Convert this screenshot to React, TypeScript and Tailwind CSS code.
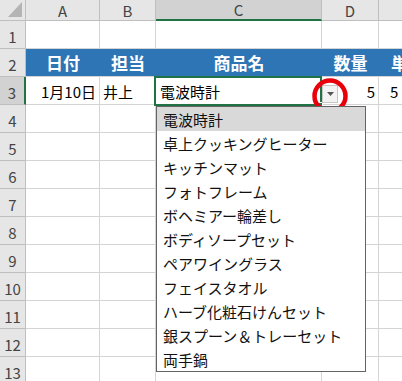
const cols = [
  { key: "A", w: "w-[74px]" },
  { key: "B", w: "w-[56px]" },
  { key: "C", w: "w-[166px]" },
  { key: "D", w: "w-[57px]" },
  { key: "E", w: "w-[80px]" },
];

const items = [
  "電波時計",
  "卓上クッキングヒーター",
  "キッチンマット",
  "フォトフレーム",
  "ボヘミアー輪差し",
  "ボディソープセット",
  "ペアワイングラス",
  "フェイスタオル",
  "ハーブ化粧石けんセット",
  "銀スプーン＆トレーセット",
  "両手鍋",
];

const RowHead = ({ n, active }: { n: number; active?: boolean }) => (
  <div
    className={`w-[26px] h-[28px] shrink-0 flex items-center justify-center border-b border-[#bfbfbf] ${
      active ? "bg-[#d2d2d2] border-r-2 border-r-[#217346]" : "bg-[#e6e6e6] border-r border-r-[#bfbfbf]"
    } text-[15px] leading-none text-[#444] pt-[3px]`}
  >
    {n}
  </div>
);

const EmptyRow = ({ n }: { n: number }) => (
  <div className="flex">
    <RowHead n={n} />
    {cols.map((c) => (
      <div key={c.key} className={`${c.w} h-[28px] shrink-0 border-r border-b border-[#d4d4d4] bg-white`} />
    ))}
  </div>
);

export default function App() {
  return (
    <div className="relative w-[402px] h-[381px] overflow-hidden bg-white font-['Noto_Sans_CJK_JP',sans-serif] text-black">
      {/* column headers */}
      <div className="flex h-[21px]">
        <div className="w-[26px] shrink-0 bg-[#e6e6e6] border-r border-b border-[#bfbfbf] relative">
          <svg className="absolute left-[8px] top-[2px]" width="14" height="15" viewBox="0 0 14 15">
            <polygon points="14,0 14,15 0,15" fill="#b4b4b4" />
          </svg>
        </div>
        {cols.map((c) => (
          <div
            key={c.key}
            className={`${c.w} shrink-0 flex items-center justify-center text-[15px] leading-none text-[#444] border-r border-[#bfbfbf] ${
              c.key === "C" ? "bg-[#d2d2d2] border-b-2 border-b-[#217346]" : "bg-[#e6e6e6] border-b border-b-[#bfbfbf]"
            }`}
          >
            {c.key}
          </div>
        ))}
      </div>

      {/* row 1 */}
      <EmptyRow n={1} />

      {/* row 2: header row */}
      <div className="flex">
        <RowHead n={2} />
        <div className="flex h-[28px] bg-[#2e75b6] text-white font-bold text-[17px] leading-none border-b border-[#d4d4d4]">
          <div className="w-[74px] flex items-center justify-center">日付</div>
          <div className="w-[56px] flex items-center justify-center">担当</div>
          <div className="w-[166px] flex items-center justify-center">商品名</div>
          <div className="w-[57px] flex items-center justify-center">数量</div>
          <div className="w-[80px] flex items-center justify-start pl-[12px]">単価</div>
        </div>
      </div>

      {/* row 3 */}
      <div className="flex text-[15px] leading-none">
        <RowHead n={3} active />
        <div className="w-[74px] h-[28px] shrink-0 flex items-center justify-end pr-[3px] pt-[2px] border-r border-b border-[#d4d4d4]">
          1月10日
        </div>
        <div className="w-[56px] h-[28px] shrink-0 flex items-center pl-[3px] pt-[2px] border-r border-b border-[#d4d4d4]">
          井上
        </div>
        <div className="w-[166px] h-[28px] shrink-0 flex items-center pl-[4px] pt-[2px] border-r border-b border-[#d4d4d4]">
          電波時計
        </div>
        <div className="w-[57px] h-[28px] shrink-0 flex items-center justify-end pr-[3px] pt-[2px] border-r border-b border-[#d4d4d4]">
          5
        </div>
        <div className="w-[80px] h-[28px] shrink-0 flex items-center pl-[11px] pt-[2px] border-r border-b border-[#d4d4d4]">
          5
        </div>
      </div>

      {[4, 5, 6, 7, 8, 9, 10, 11, 12, 13].map((n) => (
        <EmptyRow key={n} n={n} />
      ))}

      {/* selection of C3 */}
      <div className="absolute left-[154px] top-[76px] w-[168px] h-[30px] border-2 border-[#217346] pointer-events-none" />
      <div className="absolute left-[318px] top-[102px] w-[5px] h-[5px] bg-[#217346] border border-white" />

      {/* dropdown button */}
      <div className="absolute left-[322px] top-[85px] w-[16px] h-[18px] bg-[#f3f3f3] border border-[#c6c6c6] flex items-center justify-center">
        <svg width="7" height="4" viewBox="0 0 7 4">
          <polygon points="0,0 7,0 3.5,4" fill="#555" />
        </svg>
      </div>

      {/* red circle */}
      <svg className="absolute left-[311px] top-[77px]" width="38" height="38" viewBox="0 0 38 38">
        <circle cx="19" cy="19" r="15.5" fill="none" stroke="#e8000b" strokeWidth="4.5" />
      </svg>

      {/* dropdown list */}
      <div className="absolute left-[156px] top-[106px] w-[210px] bg-white border border-[#646464] text-[15px] leading-none text-[#111]">
        {items.map((it, i) => (
          <div key={it} className={`h-[24px] flex items-center pl-[6px] ${i === 0 ? "bg-[#d9d9d9]" : ""}`}>
            {it}
          </div>
        ))}
      </div>
    </div>
  );
}
